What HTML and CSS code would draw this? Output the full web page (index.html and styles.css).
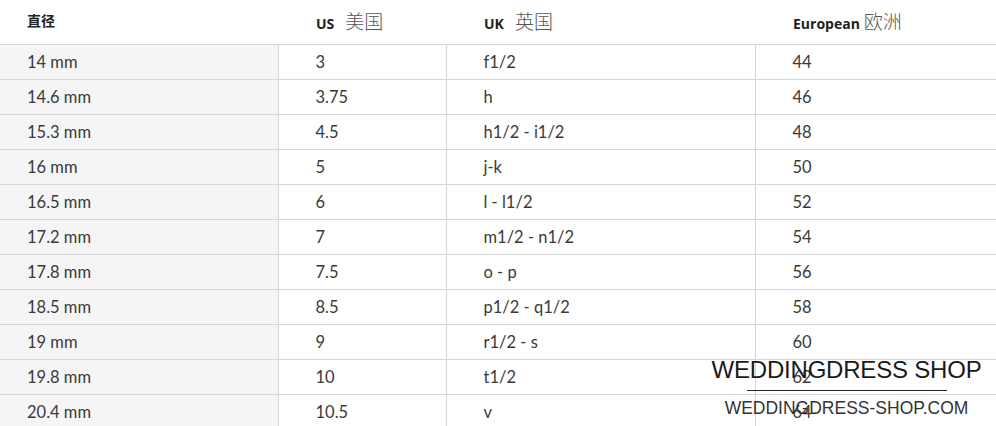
FILE: index.html
```html
<!DOCTYPE html>
<html lang="zh">
<head>
<meta charset="utf-8">
<link rel="stylesheet" href="styles.css">
</head>
<body>
<div class="page">
  <table class="sizes">
    <colgroup>
      <col class="c1"><col class="c2"><col class="c3"><col class="c4">
    </colgroup>
    <thead>
      <tr>
        <th><span class="b">直径</span></th>
        <th><span class="b">US</span><span class="cn">美国</span></th>
        <th><span class="b">UK</span><span class="cn">英国</span></th>
        <th><span class="b">European</span><span class="cn cn-tight">欧洲</span></th>
      </tr>
    </thead>
    <tbody>
      <tr><td>14 mm</td><td>3</td><td>f1/2</td><td>44</td></tr>
      <tr><td>14.6 mm</td><td>3.75</td><td>h</td><td>46</td></tr>
      <tr><td>15.3 mm</td><td>4.5</td><td>h1/2 - i1/2</td><td>48</td></tr>
      <tr><td>16 mm</td><td>5</td><td>j-k</td><td>50</td></tr>
      <tr><td>16.5 mm</td><td>6</td><td>l - l1/2</td><td>52</td></tr>
      <tr><td>17.2 mm</td><td>7</td><td>m1/2 - n1/2</td><td>54</td></tr>
      <tr><td>17.8 mm</td><td>7.5</td><td>o - p</td><td>56</td></tr>
      <tr><td>18.5 mm</td><td>8.5</td><td>p1/2 - q1/2</td><td>58</td></tr>
      <tr><td>19 mm</td><td>9</td><td>r1/2 - s</td><td>60</td></tr>
      <tr><td>19.8 mm</td><td>10</td><td>t1/2</td><td>62</td></tr>
      <tr><td>20.4 mm</td><td>10.5</td><td>v</td><td>64</td></tr>
    </tbody>
  </table>
  <div class="watermark">
    <div class="wm-title">WEDDINGDRESS SHOP</div>
    <div class="wm-rule"></div>
    <div class="wm-url">WEDDINGDRESS-SHOP.COM</div>
  </div>
</div>
</body>
</html>
```

FILE: styles.css
```css
html, body {
  margin: 0;
  padding: 0;
  background: #fff;
  overflow: hidden;
}
.page {
  position: relative;
  width: 996px;
  height: 426px;
  overflow: hidden;
  font-family: "Lato", "Noto Sans", "Noto Sans CJK SC", sans-serif;
  color: #333;
}
.sizes {
  border-collapse: collapse;
  table-layout: fixed;
  width: 996px;
}
.c1 { width: 278px; }
.c2 { width: 168px; }
.c3 { width: 309px; }
.c4 { width: 241px; }
.sizes th {
  height: 40px;
  padding: 0 0 4px 38px;
  text-align: left;
  vertical-align: middle;
  border-bottom: 1px solid #d6d6d6;
  font-weight: normal;
  white-space: nowrap;
}
.sizes th:first-child { padding-left: 27px; }
.b {
  font-family: "Open Sans", "Noto Sans CJK SC", sans-serif;
  font-weight: 700;
  font-size: 14px;
  color: #222;
}
.cn {
  font-family: "Noto Sans CJK SC", sans-serif;
  font-size: 19px;
  color: #555;
  margin-left: 11px;
  font-weight: 300;
}
.cn-tight { margin-left: 4px; }
.sizes td {
  height: 33px;
  padding: 0 0 1px 37px;
  font-size: 16.5px;
  color: #3a3a3a;
  border-bottom: 1px solid #d6d6d6;
  border-left: 1px solid #d6d6d6;
  vertical-align: middle;
  white-space: nowrap;
}
.sizes td:first-child {
  padding-left: 27px;
  border-left: none;
  background: #f5f5f5;
}
.watermark {
  position: absolute;
  left: 700px;
  top: 355px;
  width: 293px;
  display: flex;
  flex-direction: column;
  align-items: center;
  color: #1a1a1a;
  font-family: "Liberation Sans", sans-serif;
  white-space: nowrap;
}
.wm-title {
  font-size: 24px;
  line-height: 30px;
  letter-spacing: -0.2px;
}
.wm-rule {
  width: 200px;
  height: 1px;
  background: #222;
  margin: 5px 0 7px;
}
.wm-url {
  font-size: 17.5px;
  line-height: 20px;
  color: #333;
}
```
